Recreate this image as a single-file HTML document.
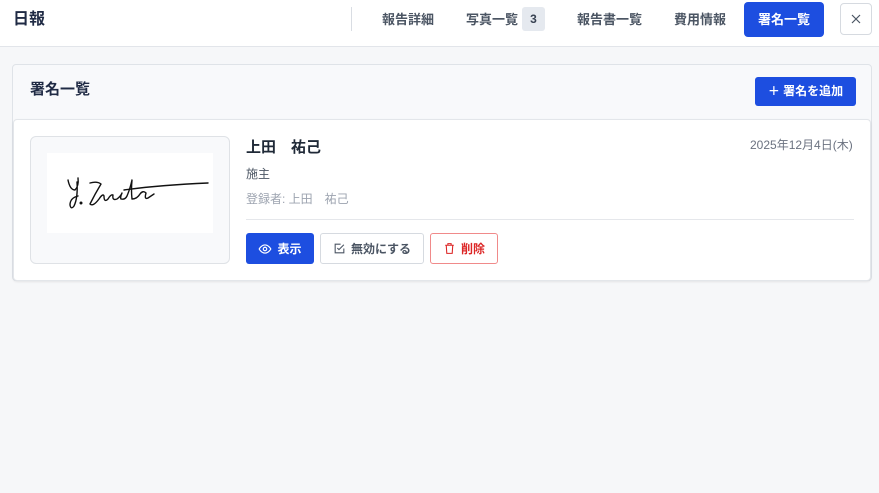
<!DOCTYPE html>
<html><head><meta charset="utf-8"><style>
*{box-sizing:border-box;margin:0;padding:0}
body{width:879px;height:493px;background:#f6f7f9;font-family:"Liberation Sans","Noto Sans CJK JP",sans-serif;position:relative;overflow:hidden;color:#1f2937}
.top{position:absolute;left:0;top:0;width:879px;height:47px;background:#fff;border-bottom:1px solid #e2e5ea}
.abs{position:absolute}
.tab{position:absolute;top:9px;font-size:13px;font-weight:bold;color:#4b5563}
.card{position:absolute;left:12px;top:64px;width:860px;height:217px;border:1px solid #dfe3e8;border-radius:4px;background:#f8f9fb}
.item{position:absolute;left:0;top:54px;width:858px;height:162px;background:#fff;border:1px solid #e3e6ea;border-radius:4px;box-shadow:0 1px 2px rgba(0,0,0,.08)}
.btn{position:absolute;top:113px;height:31px;border-radius:3px;font-size:12px;font-weight:bold;display:flex;align-items:center;justify-content:center;gap:5px}
</style></head><body>
<div class="top">
<div class="abs" style="left:13px;top:5px;font-size:16px;font-weight:bold;color:#1f2a44">日報</div>
<div class="abs" style="left:351px;top:7px;width:1px;height:24px;background:#d9dde3"></div>
<div class="tab" style="left:382px">報告詳細</div>
<div class="tab" style="left:466px">写真一覧</div>
<div class="abs" style="left:522px;top:7px;width:23px;height:24px;background:#e5e9ef;border-radius:3px;font-size:12px;font-weight:bold;color:#374151;text-align:center;line-height:24px">3</div>
<div class="tab" style="left:577px">報告書一覧</div>
<div class="tab" style="left:674px">費用情報</div>
<div class="abs" style="left:744px;top:2px;width:80px;height:35px;background:#1d4ee0;border-radius:4px;color:#fff;font-size:13px;font-weight:bold;text-align:center;line-height:35px">署名一覧</div>
<div class="abs" style="left:840px;top:3px;width:32px;height:32px;border:1px solid #d6dae0;border-radius:4px"><svg width="30" height="30" viewBox="0 0 30 30" style="position:absolute;left:0;top:0" stroke="#4b5563" stroke-width="1.2"><path d="M11 11l8 8M19 11l-8 8"/></svg></div>
</div>
<div class="card">
<div class="abs" style="left:17px;top:13px;font-size:15px;font-weight:bold;color:#1f2a44">署名一覧</div>
<div class="abs" style="left:742px;top:12px;width:101px;height:29px;background:#1d4ee0;border-radius:3px;color:#fff;font-size:12px;font-weight:bold;text-align:center;line-height:29px">＋ 署名を追加</div>
<div class="item">
<div class="abs" style="left:16px;top:16px;width:200px;height:128px;border:1px solid #dfe2e6;border-radius:6px;background:#f8f9fb">
<div class="abs" style="left:16px;top:16px;width:166px;height:80px;background:#fff">
<svg width="166" height="80" viewBox="47 153 166 80" style="position:absolute;left:0;top:0" fill="none" stroke="#111" stroke-width="1.4" stroke-linecap="round" stroke-linejoin="round">
<path d="M68 180 Q70 190 75 190 Q79 186 78 178 M77 182 Q78 198 74 206 Q71 210 70 205 Q70 198 78 196"/>
<circle cx="81" cy="203" r="0.8" fill="#111"/>
<path d="M90 183 Q97 181 101 184 Q95 194 90 204 Q93 207 99 199 Q103 193 104 196 Q104 203 108 199 Q111 194 113 195 Q112 201 117 199 Q121 196 122 193 Q120 197 121 199 Q125 200 127 196 Q130 189 132 180 Q131 190 132 199 Q137 199 140 194 Q143 190 146 193 Q144 200 148 198 Q151 196 154 194"/>
<path d="M124 190 Q160 185 208 183"/>
</svg></div></div>
<div class="abs" style="left:232px;top:16px;font-size:15px;font-weight:bold;color:#1f2937">上田　祐己</div>
<div class="abs" style="left:736px;top:16px;font-size:12px;color:#6b7280">2025年12月4日(木)</div>
<div class="abs" style="left:232px;top:45px;font-size:12px;color:#4b5563">施主</div>
<div class="abs" style="left:232px;top:70px;font-size:12px;color:#9ca3af">登録者: 上田　祐己</div>
<div class="abs" style="left:232px;top:99px;width:608px;height:1px;background:#e5e7eb"></div>
<div class="btn" style="left:232px;width:68px;background:#1d4ee0;color:#fff"><svg width="14" height="14" viewBox="0 0 24 24" fill="none" stroke="#fff" stroke-width="2"><path d="M2 12s4-7 10-7 10 7 10 7-4 7-10 7S2 12 2 12z"/><circle cx="12" cy="12" r="3"/></svg>表示</div>
<div class="btn" style="left:306px;width:104px;border:1px solid #d6dae0;color:#4b5563"><svg width="13" height="13" viewBox="0 0 24 24" fill="none" stroke="#4b5563" stroke-width="2"><path d="M20 12v8H4V4h10"/><path d="M8 11l3 3 9-9"/></svg>無効にする</div>
<div class="btn" style="left:416px;width:68px;border:1px solid #f08a8a;color:#dc2626"><svg width="13" height="13" viewBox="0 0 24 24" fill="none" stroke="#dc2626" stroke-width="2"><path d="M4 6h16M9 6V3h6v3M6 6l1 15h10l1-15"/></svg>削除</div>
</div></div>
</body></html>
